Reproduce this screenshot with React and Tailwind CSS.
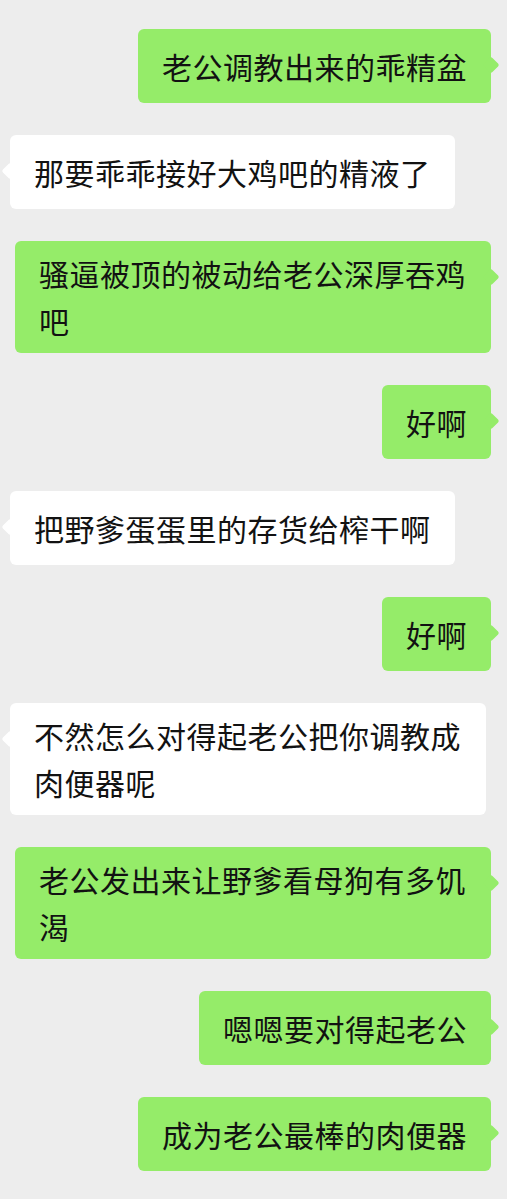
import React from "react";

const messages = [
  { side: "right", text: "老公调教出来的乖精盆" },
  { side: "left", text: "那要乖乖接好大鸡吧的精液了" },
  { side: "right", text: "骚逼被顶的被动给老公深厚吞鸡吧" },
  { side: "right", text: "好啊" },
  { side: "left", text: "把野爹蛋蛋里的存货给榨干啊" },
  { side: "right", text: "好啊" },
  { side: "left", text: "不然怎么对得起老公把你调教成肉便器呢" },
  { side: "right", text: "老公发出来让野爹看母狗有多饥渴" },
  { side: "right", text: "嗯嗯要对得起老公" },
  { side: "right", text: "成为老公最棒的肉便器" },
];

function Bubble({ side, text }) {
  const right = side === "right";
  return (
    <div className={right ? "flex justify-end pr-[16px]" : "flex justify-start pl-[10px]"}>
      <div
        className={
          (right ? "bg-[#95ec69] " : "bg-white ") +
          "relative flex items-center max-w-[476px] min-h-[74px] rounded-[6px] px-[24px] py-[9px] text-[30px] leading-[47px] tracking-[0.5px] text-[#121212]"
        }
      >
        <span>{text}</span>
        <span
          className={
            (right ? "bg-[#95ec69] right-[-6px] " : "bg-white left-[-6px] ") +
            "absolute top-[30px] h-[12px] w-[12px] rotate-45 rounded-[2px]"
          }
        />
      </div>
    </div>
  );
}

export default function App() {
  return (
    <div className="min-h-screen w-full bg-[#ededed] font-['Noto_Sans_CJK_SC','Noto_Sans',sans-serif]">
      <div className="flex flex-col gap-[32px] pt-[29px] pb-[28px]">
        {messages.map((m, i) => (
          <Bubble key={i} side={m.side} text={m.text} />
        ))}
      </div>
    </div>
  );
}
